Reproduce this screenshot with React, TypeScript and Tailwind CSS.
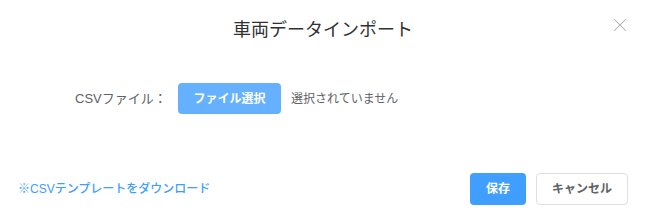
import { X } from 'lucide-react'

export default function App() {
  return (
    <div
      className="relative w-[646px] h-[223px] bg-white flex flex-col"
      style={{ fontFamily: '"Liberation Sans", "Noto Sans CJK JP", sans-serif' }}
    >
      <div className="h-[60px] flex items-center justify-center">
        <h2 className="text-[18px] text-[#303133]">車両データインポート</h2>
      </div>
      <button className="absolute right-[15px] top-[14px] text-[#a8abb2]">
        <X size={22} strokeWidth={1.1} />
      </button>

      <div className="flex items-center pl-[75px] pt-[23px]">
        <span className="text-[13px] text-[#606266] w-[103px]">CSVファイル：</span>
        <button className="h-[31px] w-[103px] rounded bg-[#66b1ff] text-white text-[12px] font-bold">
          ファイル選択
        </button>
        <span className="ml-[10px] text-[12px] text-[#606266]">選択されていません</span>
      </div>

      <div className="mt-auto mb-[18px] flex items-center justify-between pl-[18px] pr-[18px]">
        <a className="text-[12px] text-[#409eff] font-medium cursor-pointer">※CSVテンプレートをダウンロード</a>
        <div className="flex gap-[10px]">
          <button className="h-[32px] w-[56px] rounded bg-[#409eff] text-white text-[12px] font-bold">
            保存
          </button>
          <button className="h-[32px] w-[92px] rounded border border-[#dcdfe6] bg-white text-[#606266] text-[12px] font-bold">
            キャンセル
          </button>
        </div>
      </div>
    </div>
  )
}
